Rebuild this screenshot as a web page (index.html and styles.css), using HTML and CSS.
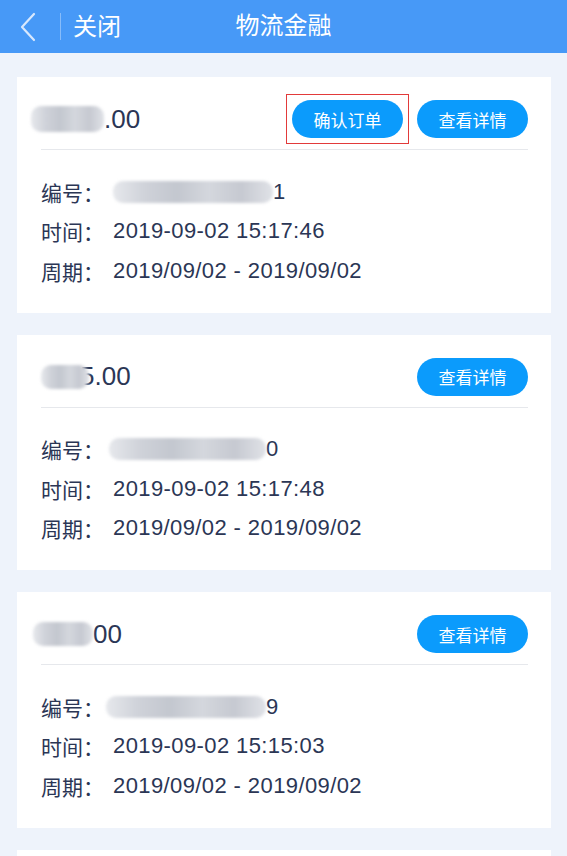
FILE: index.html
```html
<!DOCTYPE html>
<html lang="zh-CN">
<head>
    <meta charset="UTF-8">
    <meta name="viewport" content="width=device-width, initial-scale=1.0">
    <title>物流金融</title>
    <link rel="stylesheet" href="styles.css">
</head>
<body>
    <div class="header">
        <div class="header-left">
            <svg class="back" width="20" height="30" viewBox="0 0 20 30">
                <polyline points="15,2 3,15 15,28" fill="none" stroke="#d8e8fd" stroke-width="2.2" stroke-linecap="round" stroke-linejoin="round"/>
            </svg>
            <span class="divider"></span>
            <span class="close">关闭</span>
        </div>
        <span class="title">物流金融</span>
        <div></div>
    </div>

    <div class="list">
        <div class="card">
            <div class="card-top">
                <div class="amount"><span class="mask mask-a1"></span>.00</div>
                <div class="actions">
                    <span class="mark"><a class="btn">确认订单</a></span>
                    <a class="btn">查看详情</a>
                </div>
            </div>
            <div class="rows">
                <div class="row"><span class="label">编号：</span><span class="mask mask-n1"></span>1</div>
                <div class="row"><span class="label">时间：</span>2019-09-02 15:17:46</div>
                <div class="row"><span class="label">周期：</span>2019/09/02 - 2019/09/02</div>
            </div>
        </div>

        <div class="card">
            <div class="card-top">
                <div class="amount"><span class="mask mask-a2"></span>5.00</div>
                <div class="actions">
                    <a class="btn">查看详情</a>
                </div>
            </div>
            <div class="rows">
                <div class="row"><span class="label">编号：</span><span class="mask mask-n2"></span>0</div>
                <div class="row"><span class="label">时间：</span>2019-09-02 15:17:48</div>
                <div class="row"><span class="label">周期：</span>2019/09/02 - 2019/09/02</div>
            </div>
        </div>

        <div class="card">
            <div class="card-top">
                <div class="amount"><span class="mask mask-a3"></span>00</div>
                <div class="actions">
                    <a class="btn">查看详情</a>
                </div>
            </div>
            <div class="rows">
                <div class="row"><span class="label">编号：</span><span class="mask mask-n3"></span>9</div>
                <div class="row"><span class="label">时间：</span>2019-09-02 15:15:03</div>
                <div class="row"><span class="label">周期：</span>2019/09/02 - 2019/09/02</div>
            </div>
        </div>

        <div class="card"></div>
    </div>
</body>
</html>
```

FILE: styles.css
```css
body {
    font-family: "Liberation Sans", "Noto Sans CJK SC", sans-serif;
    background-color: #eef3fb;
    margin: 0;
    padding: 0;
    color: #2b3655;
}
.header {
    background-color: #4799f7;
    color: white;
    height: 53px;
    display: grid;
    grid-template-columns: 1fr auto 1fr;
    align-items: center;
}
.header-left {
    display: flex;
    align-items: center;
    padding-left: 19px;
}
.header .back {
    display: block;
}
.header .divider {
    width: 1px;
    height: 27px;
    background-color: rgba(255, 255, 255, 0.35);
    margin-left: 21px;
    margin-right: 12px;
}
.header .close {
    font-family: "Noto Sans CJK SC", sans-serif;
    font-size: 24px;
    line-height: 1;
    margin-top: -4px;
}
.header .title {
    font-family: "Noto Sans CJK SC", sans-serif;
    font-size: 24px;
    line-height: 1;
    margin-top: -6px;
}

.list {
    padding: 24px 16px 0 17px;
    display: flex;
    flex-direction: column;
    gap: 22px;
}
.card {
    background-color: #ffffff;
    padding: 23px 23px 22px 24px;
    min-height: 190px;
}
.card-top {
    display: flex;
    justify-content: space-between;
    align-items: center;
    padding-bottom: 11px;
    border-bottom: 1px solid #e6e8ec;
}
.amount {
    font-size: 26px;
    display: flex;
    align-items: center;
}
.actions {
    display: flex;
    gap: 14px;
}
.mark {
    outline: 1px solid #e23a3a;
    outline-offset: 5px;
    display: inline-flex;
}
.btn {
    display: inline-flex;
    align-items: center;
    justify-content: center;
    width: 111px;
    height: 38px;
    border-radius: 19px;
    background-color: #0b9bfc;
    color: white;
    font-family: "Noto Sans CJK SC", sans-serif;
    font-size: 17px;
    text-decoration: none;
}
.rows {
    padding-top: 22px;
}
.row {
    font-size: 22px;
    letter-spacing: 0.4px;
    height: 39.5px;
    display: flex;
    align-items: center;
}
.label {
    font-family: "Noto Sans CJK SC", sans-serif;
    font-size: 21px;
    letter-spacing: 0;
    width: 72px;
    flex-shrink: 0;
}

/* mosaico dos dados ocultos */
.mask {
    display: inline-block;
    height: 22px;
    border-radius: 10px;
    filter: blur(1.5px);
    background: linear-gradient(90deg, #e6e8ec 0%, #cfd2d9 20%, #c3c7cf 40%, #d4d7dd 60%, #c6c9d1 80%, #e0e2e7 100%);
}
.mask-a1 { width: 73px; height: 26px; margin-left: -10px; }
.mask-a2 {
    width: 48px;
    height: 24px;
    margin-right: -9px;
    position: relative;
    z-index: 1;
}
.mask-a3 { width: 60px; height: 24px; margin-left: -8px; }
.mask-n1 { width: 160px; }
.mask-n2 { width: 157px; margin-left: -4px; }
.mask-n3 { width: 160px; margin-left: -7px; }
```
